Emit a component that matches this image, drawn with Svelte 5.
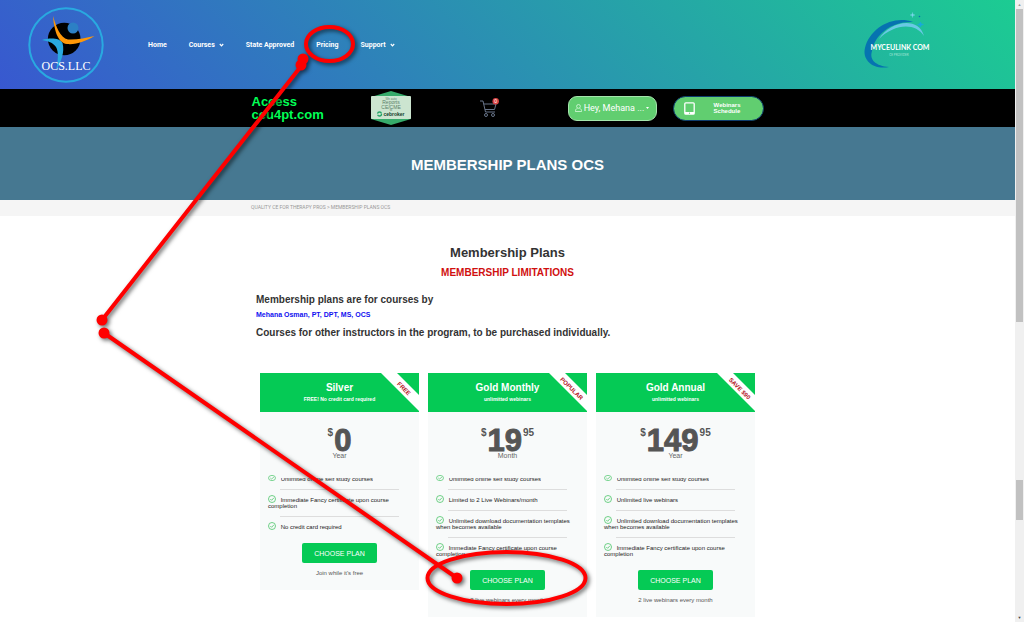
<script lang="ts">
	interface Feature {
		text: string;
		cut?: boolean;
	}

	interface Plan {
		name: string;
		tagline: string;
		ribbon: string;
		whole: string;
		cents: string;
		period: string;
		features: Feature[];
		note: string;
	}

	const nav = [
		{ label: 'Home', menu: false },
		{ label: 'Courses', menu: true },
		{ label: 'State Approved', menu: false },
		{ label: 'Pricing', menu: false },
		{ label: 'Support', menu: true }
	];

	const study = { text: 'Unlimited online self study courses', cut: true };
	const certificate = { text: 'Immediate Fancy certificate upon course completion' };
	const templates = { text: 'Unlimited download documentation templates when becomes available' };

	const plans: Plan[] = [
		{
			name: 'Silver',
			tagline: 'FREE! No credit card required',
			ribbon: 'FREE',
			whole: '0',
			cents: '',
			period: 'Year',
			features: [study, certificate, { text: 'No credit card required' }],
			note: "Join while it's free"
		},
		{
			name: 'Gold Monthly',
			tagline: 'unlimitted webinars',
			ribbon: 'POPULAR',
			whole: '19',
			cents: '95',
			period: 'Month',
			features: [study, { text: 'Limited to 2 Live Webinars/month' }, templates, certificate],
			note: '2 live webinars every month'
		},
		{
			name: 'Gold Annual',
			tagline: 'unlimitted webinars',
			ribbon: 'SAVE $90',
			whole: '149',
			cents: '95',
			period: 'Year',
			features: [study, { text: 'Unlimited live webinars' }, templates, certificate],
			note: '2 live webinars every month'
		}
	];
</script>

<div class="screen">
	<div class="page">
		<header class="header">
			<a href="/" class="logo" aria-label="OCS.LLC">
				<svg width="76" height="76" viewBox="0 0 76 76">
					<circle cx="38" cy="38" r="36.7" fill="none" stroke="#29a9e0" stroke-width="2" />
					<circle cx="36.2" cy="32" r="16.3" fill="#000" />
					<circle cx="45" cy="21" r="5.5" fill="#2c80c5" />
					<path d="M25 9C28 19 32 31 40 32.5C48 33 58 31 66.5 29C58 34 48 38 39 37C29 36 26 21 25 9Z" fill="#ff9808" />
					<path d="M14 33C22 30.5 32 31 34.5 36C37 45 33 55 28 64C30 54 31 45 28 40C25 35.5 20 34 14 33Z" fill="#29a9e0" />
					<text x="38" y="63" text-anchor="middle" class="logo-text">OCS.LLC</text>
				</svg>
			</a>

			<nav class="nav">
				{#each nav as item}
					<a href="/" class="nav-link">
						{item.label}
						{#if item.menu}
							<svg width="5" height="4" viewBox="0 0 5 4">
								<path d="M.8 1L2.5 2.8L4.2 1" fill="none" stroke="#fff" stroke-width="1.2" />
							</svg>
						{/if}
					</a>
				{/each}
			</nav>

			<a href="/" class="partner" aria-label="MYCEULINK.COM">
				<svg width="66" height="60" viewBox="0 0 66 60">
					<path d="M49 12C29 5 6 18 1 38C-2 50 9 60 25 57C12 56 5 50 8 41C11 24 28 11 49 12Z" fill="#0673b0" />
					<path d="M15 29C25 12 54 5 60 26C51 12 30 14 15 29Z" fill="#69c9e4" />
					<path d="M48.5 2.5L49 4.5L51 5L49 5.5L48.5 7.5L48 5.5L46 5L48 4.5Z" fill="#7fd6ee" stroke="#7fd6ee" stroke-width=".3" />
					<path d="M56.5 12L57.2 13.8L59.5 14.5L57.2 15.2L56.5 17L55.8 15.2L53.5 14.5L55.8 13.8Z" fill="#19a9dd" stroke="#19a9dd" stroke-width=".5" />
					<circle cx="55.5" cy="6.5" r=".8" fill="#0673b0" />
					<text x="36" y="40" text-anchor="middle" class="partner-name">MYCEULINK<tspan fill="#0673b0">.</tspan>COM</text>
					<text x="35" y="46" text-anchor="middle" class="partner-sub">CE PROVIDER</text>
				</svg>
			</a>
		</header>

		<div class="toolbar">
			<div class="toolbar-inner">
				<a href="/" class="access">Access<br />ceu4pt.com</a>
				<svg class="badge" width="40" height="34" viewBox="0 0 40 34">
					<path d="M20 0L40 6V28L20 34L0 28V6Z" fill="#37ab6b" />
					<rect y="5" width="40" height="23" rx="1" fill="#cce5d0" />
					<g text-anchor="middle" class="badge-text">
						<text x="20" y="9" class="badge-tiny">We auto</text>
						<text x="20" y="13">Reports</text>
						<text x="20" y="18">CE/CME</text>
						<text x="20" y="20" class="badge-tiny">to</text>
						<text x="23" y="25" class="badge-brand">cebroker</text>
					</g>
					<circle cx="8.5" cy="23" r="2" fill="none" stroke="#21a366" stroke-width="1.3" stroke-dasharray="5 1" />
				</svg>
				<a href="/" class="cart" aria-label="Cart">
					<svg width="20" height="20" viewBox="0 0 20 20">
						<path d="M1 3H4L6.5 14H16M4.8 6H17L15.5 11.5H6" fill="none" stroke="#68758a" />
						<circle cx="7" cy="17" r="1.5" fill="none" stroke="#68758a" />
						<circle cx="14" cy="17" r="1.5" fill="none" stroke="#68758a" />
						<circle cx="16.7" cy="3.3" r="3.2" fill="#d94343" />
						<text x="16.7" y="5" text-anchor="middle" class="cart-count">0</text>
					</svg>
				</a>
				<button type="button" class="pill account">
					<svg width="7" height="8" viewBox="0 0 7 8" fill="none" stroke="#e9ffec" stroke-width=".7">
						<circle cx="3.5" cy="2.4" r="1.9" />
						<path d="M2.3 4.5C.7 4.9.4 6 .4 7.5H6.6C6.6 6 6.3 4.9 4.7 4.5" />
					</svg>
					<span>Hey, Mehana ...</span>
					<svg width="3" height="2" viewBox="0 0 3 2"><path d="M0 0H3L1.5 2Z" fill="#fff" /></svg>
				</button>
				<button type="button" class="pill schedule">
					<svg width="11" height="13" viewBox="0 0 11 13">
						<rect x=".8" y=".8" width="9.4" height="11.4" rx="1" fill="none" stroke="#fff" stroke-width="1.3" />
						<path d="M1 10H10V12H1Z" fill="#fff" />
						<circle cx="5.5" cy="11.2" r=".6" fill="#5cce6c" />
					</svg>
					<span>Webinars<br />Schedule</span>
				</button>
			</div>
		</div>

		<div class="banner"><h1>MEMBERSHIP PLANS OCS</h1></div>
		<div class="crumbs">
			<div class="crumbs-inner"><a href="/">QUALITY CE FOR THERAPY PROS</a> &gt; MEMBERSHIP PLANS OCS</div>
		</div>

		<main class="content">
			<h2>Membership Plans</h2>
			<h3>MEMBERSHIP LIMITATIONS</h3>
			<div class="intro">
				<p>Membership plans are for courses by</p>
				<a href="/">Mehana Osman, PT, DPT, MS, OCS</a>
				<p>Courses for other instructors in the program, to be purchased individually.</p>
			</div>

			<div class="plans">
				{#each plans as plan}
					<section class="plan">
						<div class="plan-head">
							<h4>{plan.name}</h4>
							<span>{plan.tagline}</span>
							<div class="ribbon"><b>{plan.ribbon}</b></div>
						</div>
						<div class="price">
							<sup>$</sup><strong>{plan.whole}</strong>{#if plan.cents}<sup>{plan.cents}</sup>{/if}
						</div>
						<div class="period">{plan.period}</div>
						<ul>
							{#each plan.features as feature}
								<li class:cut={feature.cut}>
									<svg class="check" width="8" height="8" viewBox="0 0 8 8" preserveAspectRatio="none">
										<circle cx="4" cy="4" r="3.5" />
										<path d="M2.3 4L3.6 5.3L5.9 2.8" />
									</svg>
									<span>{feature.text}</span>
								</li>
							{/each}
						</ul>
						<button type="button" class="choose">CHOOSE PLAN</button>
						<div class="note">{plan.note}</div>
					</section>
				{/each}
			</div>
		</main>
	</div>

	<div class="scrollbar" aria-hidden="true">
		<span class="arrow">▲</span>
		<span class="thumb first"></span>
		<span class="gap"></span>
		<span class="thumb second"></span>
		<span class="gap last"></span>
		<span class="arrow dark">▼</span>
	</div>

	<svg class="marks" width="1024" height="622" viewBox="0 0 1024 622" aria-hidden="true">
		<g fill="none" stroke="#f00" stroke-width="4">
			<ellipse cx="329.5" cy="44" rx="23.5" ry="17" />
			<path d="M302 65L102 320M104 333L457 578" />
			<ellipse cx="506.5" cy="578" rx="79" ry="26" />
		</g>
		<g fill="#f00">
			<circle cx="303" cy="59" r="5.5" />
			<circle cx="301" cy="65" r="5.5" />
			<circle cx="102" cy="320" r="5.5" />
			<circle cx="104" cy="333" r="5.5" />
			<circle cx="457" cy="578" r="5.5" />
		</g>
	</svg>
</div>

<style>
	:global(body) {
		margin: 0;
		background: #fff;
	}

	.screen {
		position: relative;
		display: flex;
		min-height: 100vh;
		overflow: hidden;
		font-family: "Liberation Sans", Arial, sans-serif;
		color: #333;
	}

	.page {
		flex: 1;
		min-width: 0;
	}

	a {
		text-decoration: none;
	}

	h1, h2, h3, h4, p, ul {
		margin: 0;
		padding: 0;
	}

	button {
		border: 0;
		padding: 0;
		font-family: inherit;
		color: #fff;
		cursor: pointer;
	}

	svg {
		display: block;
	}

	.header {
		display: flex;
		align-items: center;
		box-sizing: border-box;
		height: 89px;
		padding: 0 85px 0 28px;
		background: linear-gradient(45deg, #3858d0, #1ccc92);
	}

	.logo-text {
		font: 12px "Liberation Serif", serif;
		fill: #fff;
	}

	.nav {
		display: flex;
		gap: 22px;
		margin-left: 44px;
	}

	.nav-link {
		display: flex;
		align-items: center;
		gap: 4px;
		font: bold 7px/10px Roboto, sans-serif;
		color: #fff;
	}

	.partner {
		margin-left: auto;
		padding-bottom: 10px;
	}

	.partner svg {
		overflow: visible;
	}

	.partner-name {
		font: bold 7px Lato, sans-serif;
		fill: #fff;
	}

	.partner-sub {
		font: 3px Lato, sans-serif;
		fill: #a6e6d8;
	}

	.toolbar {
		background: #000;
	}

	.toolbar-inner {
		display: flex;
		align-items: center;
		width: 512px;
		height: 38px;
		margin: 0 auto;
	}

	.access {
		width: 119px;
		font-size: 13px;
		line-height: 13px;
		font-weight: bold;
		color: #00ff55;
	}

	.badge-text {
		font-size: 5px;
		fill: #5b8069;
	}

	.badge-tiny {
		font-size: 3px;
	}

	.badge-brand {
		font-size: 5px;
		font-weight: bold;
		fill: #123c2b;
	}

	.cart {
		margin: 0 auto;
	}

	.cart-count {
		font-size: 5px;
		fill: #fff;
	}

	.pill {
		display: flex;
		align-items: center;
		box-sizing: border-box;
		height: 25px;
		background: #61ce70;
	}

	.account {
		justify-content: center;
		gap: 2px;
		width: 89px;
		margin-right: 16px;
		border: 1px solid #a5e5ac;
		border-radius: 9px;
		font: 9px Roboto, sans-serif;
	}

	.schedule {
		width: 91px;
		padding: 0 22px 0 10px;
		justify-content: space-between;
		border: 1px solid #0d3c6e;
		border-radius: 13px;
		font: bold 6px/6px "Liberation Sans", sans-serif;
		text-align: left;
	}

	.banner {
		display: flex;
		align-items: center;
		justify-content: center;
		height: 73px;
		background: #467891;
	}

	h1 {
		padding-top: 2px;
		font-size: 15px;
		color: #fff;
	}

	.crumbs {
		background: #f5f5f5;
	}

	.crumbs-inner {
		width: 513px;
		margin: 0 auto;
		padding-bottom: 2px;
		font: 5px/14px Roboto, sans-serif;
		color: #999;
	}

	.crumbs a {
		color: inherit;
	}

	.content {
		box-sizing: border-box;
		width: 513px;
		margin: 0 auto;
		padding: 27px 9px 5px;
	}

	h2 {
		font-size: 13px;
		line-height: 20px;
		text-align: center;
	}

	h3 {
		margin-top: 3px;
		font-size: 10px;
		line-height: 14px;
		color: #d01010;
		text-align: center;
	}

	.intro {
		margin: 13px 0 33px -4px;
		font-weight: bold;
	}

	.intro p {
		font-size: 10px;
		line-height: 14px;
	}

	.intro a {
		display: block;
		margin-bottom: 4px;
		font-size: 7px;
		line-height: 15px;
		color: #1010f0;
	}

	.plans {
		display: grid;
		grid-template-columns: repeat(3, 1fr);
		align-items: start;
		gap: 9px;
	}

	.plan {
		padding-bottom: 12px;
		background: #f8fafa;
		text-align: center;
	}

	.plan-head {
		position: relative;
		height: 30px;
		padding-top: 9px;
		background: #05ca55;
		color: #fff;
		overflow: hidden;
	}

	h4 {
		font-size: 10px;
		line-height: 12px;
	}

	.plan-head span {
		display: block;
		font-size: 5px;
		line-height: 10px;
		font-weight: bold;
	}

	.ribbon {
		position: absolute;
		top: 0;
		right: 0;
		display: flex;
		align-items: center;
		justify-content: center;
		width: 38px;
		height: 38px;
		background: #fff;
		clip-path: polygon(0 0, 16px 0, 100% 22px, 100% 100%);
	}

	.ribbon b {
		padding-bottom: 11px;
		font-size: 6px;
		line-height: 6px;
		white-space: nowrap;
		color: #b3101c;
		transform: rotate(45deg);
	}

	.price {
		display: flex;
		justify-content: center;
		gap: 1px;
		padding-top: 15px;
		height: 24px;
		font-weight: bold;
		color: #555;
	}

	.price strong {
		font-size: 31px;
		line-height: 27px;
		-webkit-text-stroke: 1px #555;
	}

	.price sup {
		font-size: 10px;
		line-height: 12px;
	}

	.period {
		font-size: 7px;
		line-height: 9px;
		color: #666;
	}

	ul {
		padding: 9px 8px 0;
		list-style: none;
		text-align: left;
	}

	li {
		position: relative;
		padding: 7px 0;
		font-size: 6px;
		line-height: 6px;
		color: #222;
	}

	li:not(:last-child) {
		padding-bottom: 8px;
		background: linear-gradient(#ddd, #ddd) 12px 100% / 119px 1px no-repeat;
	}

	.check {
		display: inline-block;
		margin: -3px 3px -1px 0;
		vertical-align: middle;
		fill: none;
		stroke: #4cc56a;
		stroke-width: 0.8;
	}

	.cut .check {
		height: 6px;
	}

	.cut span {
		display: inline-block;
		clip-path: inset(2px 0 0 0);
	}

	.choose {
		width: 75px;
		height: 20px;
		margin-top: 6px;
		border-radius: 2px;
		background: #05ca55;
		font-size: 7px;
		vertical-align: top;
	}

	.note {
		margin-top: 5px;
		font-size: 6px;
		line-height: 10px;
		color: #555;
	}

	.scrollbar {
		display: flex;
		flex-direction: column;
		width: 9px;
		background: #f0f0f0;
	}

	.arrow {
		height: 9px;
		font-size: 4px;
		line-height: 9px;
		text-align: center;
		color: #999;
	}

	.arrow.dark {
		color: #444;
	}

	.thumb {
		margin: 0 1px;
		background: #c1c1c1;
	}

	.first {
		flex: 313;
	}

	.gap {
		flex: 158;
	}

	.second {
		flex: 40;
	}

	.last {
		flex: 93;
	}

	.marks {
		position: absolute;
		top: 0;
		left: 0;
		pointer-events: none;
		filter: drop-shadow(2px 2px 2px rgba(0, 0, 0, 0.6));
	}
</style>
